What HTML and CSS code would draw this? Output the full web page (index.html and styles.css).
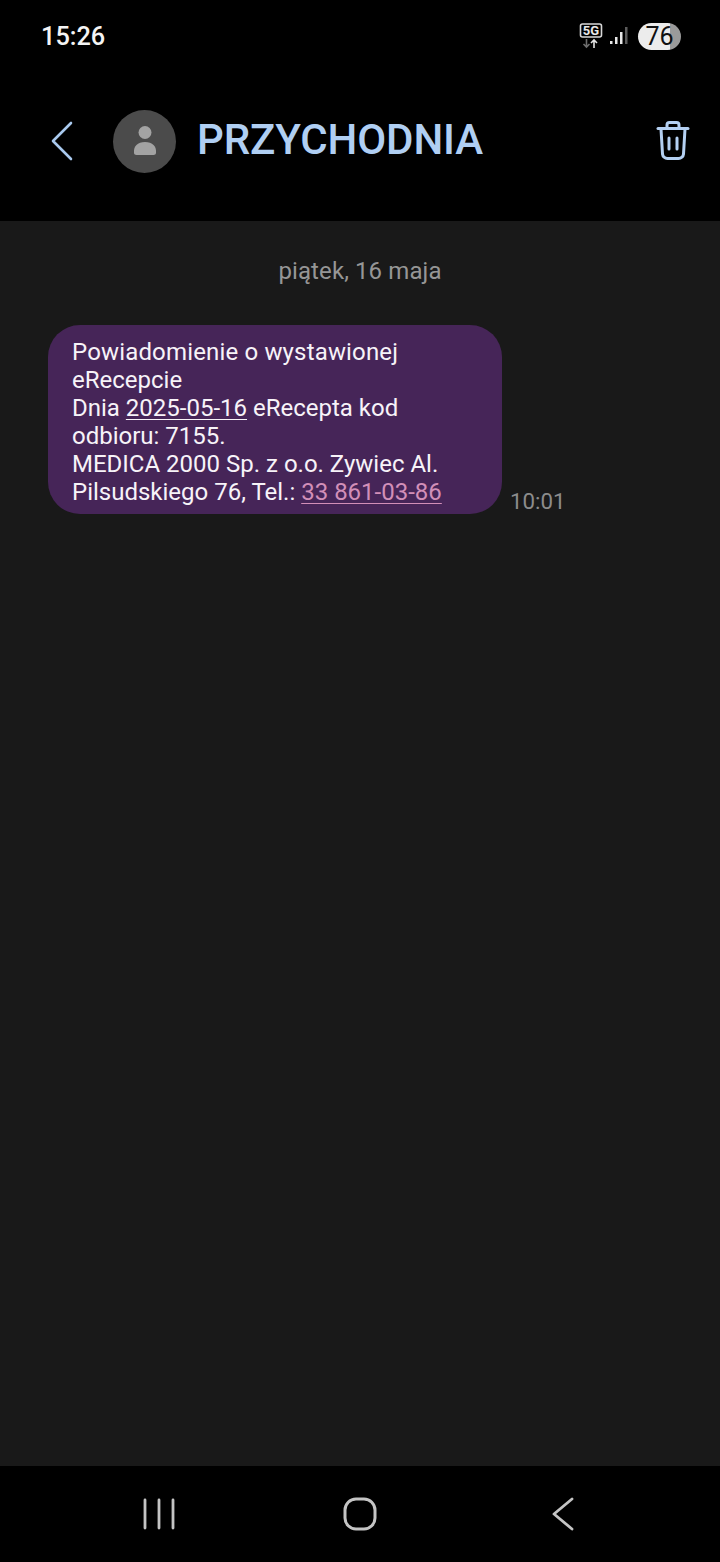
FILE: index.html
```html
<!DOCTYPE html>
<html lang="pl">
<head>
    <meta charset="UTF-8">
    <meta name="viewport" content="width=device-width, initial-scale=1.0">
    <title>PRZYCHODNIA</title>
    <link rel="stylesheet" href="styles.css">
</head>
<body>
    <div class="phone">
        <div class="status-bar">
            <span class="clock">15:26</span>
            <div class="status-icons">
                <svg class="net-icon" width="24" height="26" viewBox="0 0 24 26" fill="none">
                    <rect x="1.5" y="1" width="21" height="13" rx="2" stroke="#d8d8d8" stroke-width="1.6"/>
                    <text x="12" y="12.3" text-anchor="middle" class="net-label">5G</text>
                    <path d="M7.5 16v8M4.500 21l3 3 3-3" stroke="#6e6e6e" stroke-width="1.6"/>
                    <path d="M15 25v-8M12 20l3-3 3 3" stroke="#e4e4e4" stroke-width="1.6"/>
                </svg>
                <svg class="signal-icon" width="20" height="20" viewBox="0 0 20 20" fill="none">
                    <rect x="1" y="15" width="2.500" height="3" fill="#e8e8e8"/>
                    <rect x="6" y="11" width="2.500" height="7" fill="#e8e8e8"/>
                    <rect x="11" y="6" width="2.500" height="12" fill="#e8e8e8"/>
                    <rect x="16" y="1" width="2.500" height="17" fill="#5c5c5c"/>
                </svg>
                <div class="battery">76</div>
            </div>
        </div>

        <div class="top-bar">
            <svg class="back-icon" width="24" height="40" viewBox="0 0 24 40" fill="none">
                <path d="M21 2 3 20l18 18" stroke="#a9c9ee" stroke-width="2.600" stroke-linecap="round" stroke-linejoin="round"/>
            </svg>
            <div class="avatar">
                <svg width="24" height="32" viewBox="0 0 24 32" fill="#a3a3a3">
                    <circle cx="12" cy="7.500" r="6.500"/>
                    <path d="M1 28c-.6-7 3.500-11 11-11s11.600 4 11 11c-.1 1-1 2-2.500 2h-17C2 30 1.100 29 1 28z"/>
                </svg>
            </div>
            <h1 class="contact-name">PRZYCHODNIA</h1>
            <svg class="trash-icon" width="34" height="40" viewBox="0 0 34 40" fill="none" stroke="#b4d0f2" stroke-width="3" stroke-linecap="round" stroke-linejoin="round">
                <path d="M2 7.500h30"/>
                <path d="M11 7V4a2.500 2.500 0 0 1 2.500-2.500h7A2.500 2.500 0 0 1 23 4v3"/>
                <path d="M5 8l1.500 25a5 5 0 0 0 5 4.500h11a5 5 0 0 0 5-4.500L29 8"/>
                <path d="M13 17v11M21 17v11"/>
            </svg>
        </div>

        <main class="thread">
            <div class="date-label">piątek, 16 maja</div>
            <div class="message-row">
                <div class="bubble"><span class="first-line">Powiadomienie o wystawionej</span><br>eRecepcie<br>Dnia <span class="link">2025-05-16</span> eRecepta kod<br>odbioru: 7155.<br>MEDICA 2000 Sp. z o.o. Zywiec Al.<br>Pilsudskiego 76, Tel.: <span class="link phone-link">33 861-03-86</span></div>
                <span class="msg-time">10:01</span>
            </div>
        </main>

        <div class="nav-bar">
            <svg width="34" height="32" viewBox="0 0 34 32" fill="none" stroke="#c4c4c4" stroke-width="2.800" stroke-linecap="round">
                <path d="M3 2v28M17 2v28M31 2v28"/>
            </svg>
            <svg class="nav-home" width="34" height="34" viewBox="0 0 34 34" fill="none" stroke="#c4c4c4" stroke-width="3">
                <rect x="2" y="2" width="30" height="30" rx="11"/>
            </svg>
            <svg width="24" height="34" viewBox="0 0 24 34" fill="none" stroke="#c4c4c4" stroke-width="2.800" stroke-linecap="round" stroke-linejoin="round">
                <path d="M21 2 3 17l18 15"/>
            </svg>
        </div>
    </div>
</body>
</html>
```

FILE: styles.css
```css
* {
    margin: 0;
    padding: 0;
    box-sizing: border-box;
}
body {
    font-family: Roboto, 'Noto Sans', sans-serif;
    background: #000;
}
.phone {
    width: 720px;
    height: 1562px;
    display: flex;
    flex-direction: column;
    overflow: hidden;
}
.status-bar {
    height: 72px;
    padding: 0 39px 0 41px;
    background: #000;
    display: flex;
    align-items: center;
    justify-content: space-between;
}
.clock {
    color: #f4f4f4;
    font-size: 25.3px;
    font-weight: 500;
}
.status-icons {
    display: flex;
    align-items: center;
}
.net-icon {
    margin-right: 6px;
}
.net-label {
    font-family: Roboto, sans-serif;
    font-size: 13px;
    font-weight: 700;
    fill: #e8e8e8;
}
.signal-icon {
    margin-right: 9px;
}
.battery {
    width: 43px;
    height: 27px;
    border-radius: 14px;
    background: linear-gradient(90deg, #ececec 74%, #9a9a9a 74%);
    color: #111;
    font-size: 25px;
    font-weight: 400;
    line-height: 27px;
    text-align: center;
}
.top-bar {
    height: 149px;
    padding: 0 30px 11px 50px;
    background: #000;
    display: flex;
    align-items: center;
}
.back-icon {
    margin-right: 39px;
}
.avatar {
    width: 63px;
    height: 63px;
    border-radius: 50%;
    background: #4b4b4b;
    display: flex;
    align-items: center;
    justify-content: center;
    margin-right: 21px;
}
.contact-name {
    flex: 1;
    color: #b0cff3;
    font-size: 42px;
    font-weight: 500;
    letter-spacing: -0.1px;
    margin-bottom: 3px;
}
.thread {
    flex: 1;
    background: #191919;
    padding-top: 36px;
}
.date-label {
    color: #969696;
    font-size: 24px;
    letter-spacing: 0.1px;
    line-height: 28px;
    text-align: center;
}
.message-row {
    display: flex;
    align-items: flex-end;
    gap: 8px;
    margin: 40px 0 0 48px;
}
.bubble {
    width: 454px;
    height: 189px;
    padding: 13px 24px 0;
    border-radius: 32px;
    background: #462558;
    color: #f7f3f8;
    font-size: 24px;
    line-height: 28px;
}
.first-line {
    letter-spacing: 0.16px;
}
.link {
    text-decoration: underline;
    text-decoration-thickness: 1px;
    text-underline-offset: 3px;
}
.phone-link {
    color: #d28fb8;
}
.msg-time {
    color: #8c8c8c;
    font-size: 22.3px;
    line-height: 26px;
}
.nav-bar {
    height: 96px;
    padding-left: 142px;
    background: #000;
    display: flex;
    align-items: center;
}
.nav-home {
    margin: 0 174px 0 167px;
}
```
